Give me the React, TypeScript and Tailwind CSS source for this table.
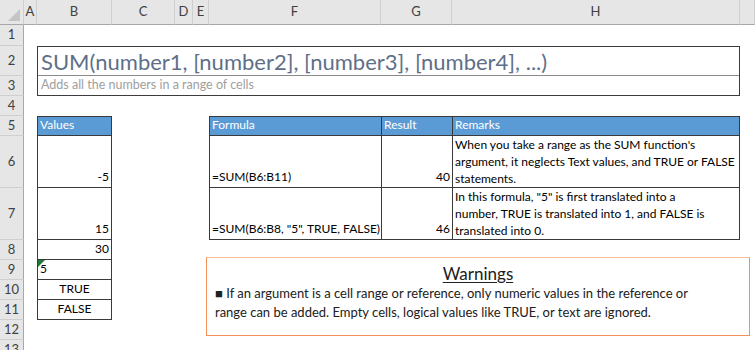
import React from 'react';

// column headers of the sheet (corner + A..H + partial I)
const colHeads = [
  { label: '', cls: 'col-start-1' },
  { label: 'A', cls: 'col-start-2' },
  { label: 'B', cls: 'col-start-3' },
  { label: 'C', cls: 'col-start-4' },
  { label: 'D', cls: 'col-start-5' },
  { label: 'E', cls: 'col-start-6' },
  { label: 'F', cls: 'col-start-7' },
  { label: 'G', cls: 'col-start-8' },
  { label: 'H', cls: 'col-start-9' },
  { label: '', cls: 'col-start-10' },
];

const rowHeads = [
  { label: '1', cls: 'row-start-2' },
  { label: '2', cls: 'row-start-3' },
  { label: '3', cls: 'row-start-4' },
  { label: '4', cls: 'row-start-5' },
  { label: '5', cls: 'row-start-6' },
  { label: '6', cls: 'row-start-7' },
  { label: '7', cls: 'row-start-8' },
  { label: '8', cls: 'row-start-9' },
  { label: '9', cls: 'row-start-10' },
  { label: '10', cls: 'row-start-11' },
  { label: '11', cls: 'row-start-12' },
  { label: '12', cls: 'row-start-13' },
  { label: '13', cls: 'row-start-14' },
];

export default function App() {
  return (
    <div className="relative w-[755px] h-[350px] overflow-hidden bg-white font-[Lato,sans-serif] text-[12px] text-black">
      <div className="grid grid-cols-[24px_13px_75px_63px_18px_16px_172px_71px_288px_15px] grid-rows-[25px_21px_30px_20px_20px_20px_52px_52px_20px_20px_20px_20px_20px_20px]">
        {colHeads.map((c, i) => (
          <div
            key={'c' + i}
            className={`${c.cls} row-start-1 relative flex items-center justify-center bg-[#e6e6e6] border-r border-b border-[#cfcfcf] border-b-[#a8a8a8] text-[13px] text-[#404040]`}
          >
            {c.label}
            {i === 0 && (
              <svg className="absolute right-[3px] bottom-[3px]" width="12" height="12" viewBox="0 0 12 12">
                <polygon points="12,0 12,12 0,12" fill="#c4c4c4" />
              </svg>
            )}
          </div>
        ))}

        {rowHeads.map((r) => (
          <div
            key={'r' + r.label}
            className={`${r.cls} col-start-1 flex items-center justify-center bg-[#e6e6e6] border-b border-r border-[#cfcfcf] border-r-[#a8a8a8] text-[13px] text-[#404040]`}
          >
            {r.label}
          </div>
        ))}

        {/* title box B2:H3 */}
        <div className="col-start-3 col-end-10 row-start-3 row-end-5 flex flex-col border border-[#3c3c3c]">
          <div className="h-[30px] flex items-end pl-[3px] pb-[2px] border-b border-[#8a8a8a] text-[22px] leading-none text-[#5f6f88]">
            SUM(number1, [number2], [number3], [number4], ...)
          </div>
          <div className="flex-1 flex items-center pl-[3px] text-[12.5px] text-[#a0a0a0]">
            Adds all the numbers in a range of cells
          </div>
        </div>

        {/* Values column */}
        <div className="col-start-3 row-start-6 flex items-end px-[2px] pb-[1px] bg-[#5b9bd5] text-white border border-[#3a3a3a]">
          Values
        </div>
        <div className="col-start-3 row-start-7 flex items-end justify-end px-[2px] pb-[1px] border-x border-b border-[#3a3a3a]">
          -5
        </div>
        <div className="col-start-3 row-start-8 flex items-end justify-end px-[2px] pb-[1px] border-x border-b border-[#3a3a3a]">
          15
        </div>
        <div className="col-start-3 row-start-9 flex items-end justify-end px-[2px] pb-[1px] border-x border-b border-[#3a3a3a]">
          30
        </div>
        <div className="col-start-3 row-start-10 relative flex items-end px-[2px] pb-[1px] border-x border-b border-[#3a3a3a]">
          <svg className="absolute left-0 top-0" width="7" height="7" viewBox="0 0 7 7">
            <polygon points="0,0 7,0 0,7" fill="#1f7a3a" />
          </svg>
          5
        </div>
        <div className="col-start-3 row-start-11 flex items-end justify-center pb-[1px] border-x border-b border-[#3a3a3a]">
          TRUE
        </div>
        <div className="col-start-3 row-start-12 flex items-end justify-center pb-[1px] border-x border-b border-[#3a3a3a]">
          FALSE
        </div>

        {/* Formula table */}
        <div className="col-start-7 row-start-6 flex items-end px-[2px] pb-[1px] bg-[#5b9bd5] text-white border-y border-l border-[#3a3a3a]">
          Formula
        </div>
        <div className="col-start-8 row-start-6 flex items-end px-[2px] pb-[1px] bg-[#5b9bd5] text-white border-y border-l border-[#3a3a3a]">
          Result
        </div>
        <div className="col-start-9 row-start-6 flex items-end px-[2px] pb-[1px] bg-[#5b9bd5] text-white border border-[#3a3a3a]">
          Remarks
        </div>

        <div className="col-start-7 row-start-7 flex items-end px-[2px] pb-[1px] whitespace-nowrap border-l border-b border-[#3a3a3a]">
          =SUM(B6:B11)
        </div>
        <div className="col-start-8 row-start-7 flex items-end justify-end px-[2px] pb-[1px] border-l border-b border-[#3a3a3a]">
          40
        </div>
        <div className="col-start-9 row-start-7 flex items-end px-[2px] leading-[17px] border-x border-b border-[#3a3a3a]">
          <span>
            When you take a range as the SUM function's
            <br />
            argument, it neglects Text values, and TRUE or FALSE
            <br />
            statements.
          </span>
        </div>

        <div className="col-start-7 row-start-8 flex items-end px-[2px] pb-[1px] whitespace-nowrap border-l border-b border-[#3a3a3a]">
          =SUM(B6:B8, "5", TRUE, FALSE)
        </div>
        <div className="col-start-8 row-start-8 flex items-end justify-end px-[2px] pb-[1px] border-l border-b border-[#3a3a3a]">
          46
        </div>
        <div className="col-start-9 row-start-8 flex items-end px-[2px] leading-[17px] border-x border-b border-[#3a3a3a]">
          <span>
            In this formula, "5" is first translated into a
            <br />
            number, TRUE is translated into 1, and FALSE is
            <br />
            translated into 0.
          </span>
        </div>
      </div>

      {/* floating warnings text box */}
      <div className="absolute left-[206px] top-[257px] w-[544px] h-[79px] border border-[#f0925a] border-t-[#f6bf98] pt-[6px] px-[8px]">
        <div className="text-center text-[17px] leading-[20px] underline underline-offset-2 text-[#202020]">
          Warnings
        </div>
        <p className="text-[13px] leading-[19px] text-[#202020]">
          ■ If an argument is a cell range or reference, only numeric values in the reference or
          <br />
          range can be added. Empty cells, logical values like TRUE, or text are ignored.
        </p>
      </div>
    </div>
  );
}
